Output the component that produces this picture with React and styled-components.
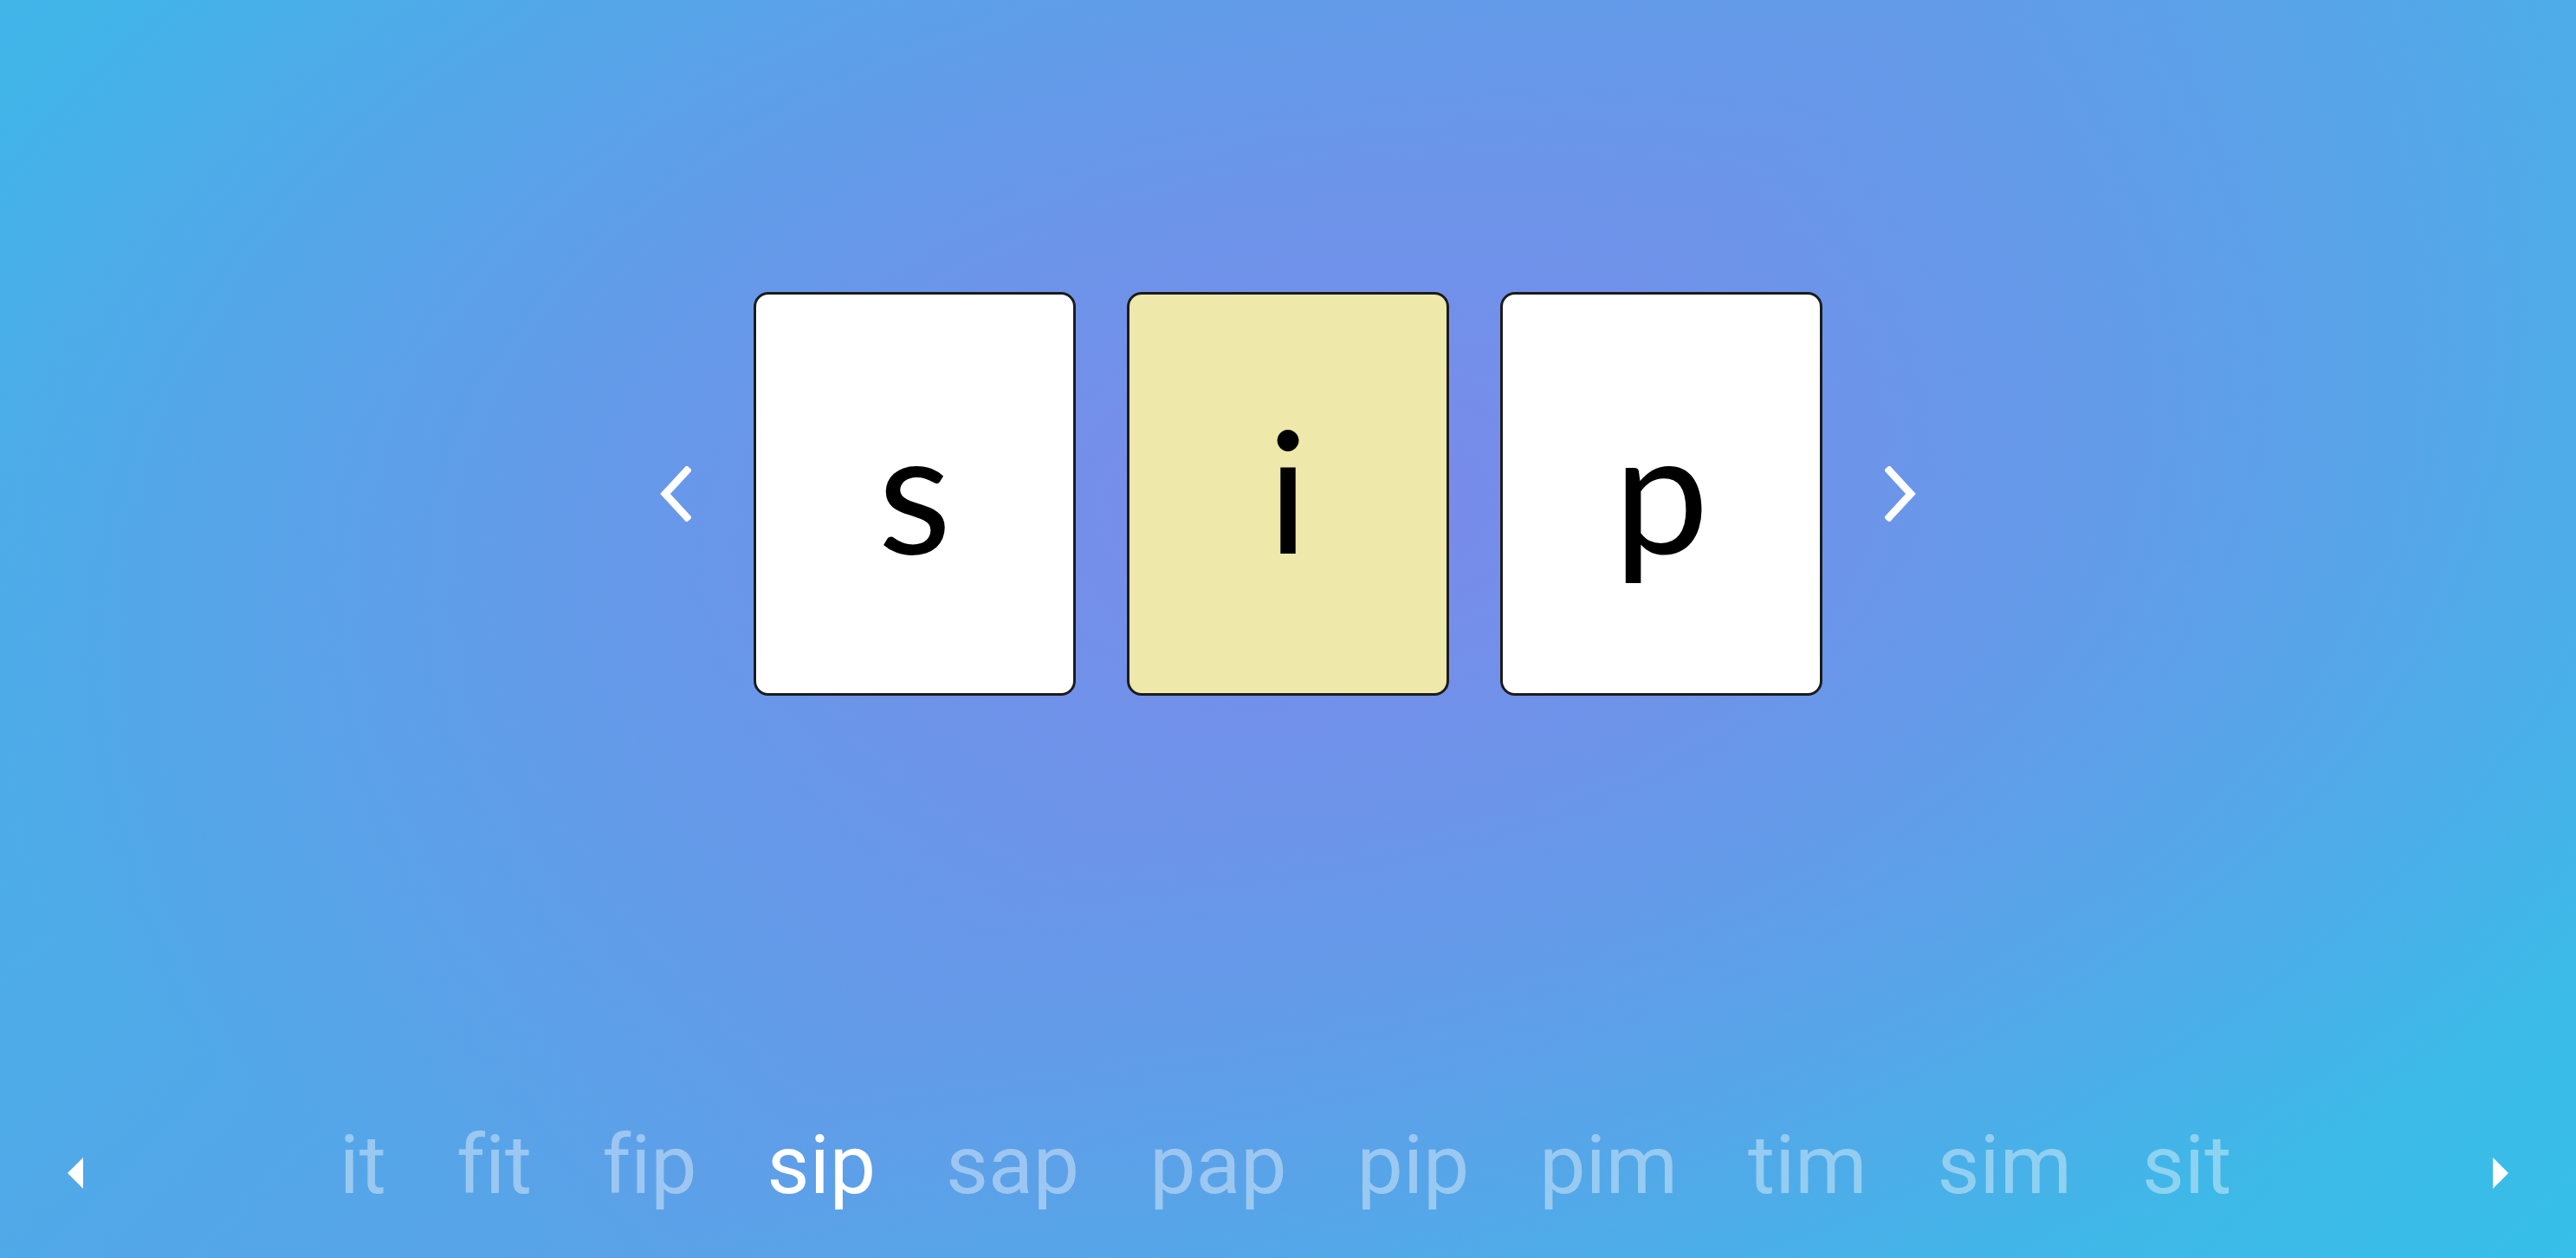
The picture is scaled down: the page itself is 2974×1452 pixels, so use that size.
import React from "react";
import styled, { createGlobalStyle } from "styled-components";

const Global = createGlobalStyle`
  html, body { margin: 0; padding: 0; height: 100%; overflow: hidden; }
  #root { height: 100%; }
`;

const Page = styled.div`
  height: 100vh;
  display: flex;
  flex-direction: column;
  background:
    radial-gradient(ellipse 58% 68% at 52% 40%, rgba(122, 138, 234, 1) 0%, rgba(122, 138, 234, 0) 100%),
    linear-gradient(135deg, #40b5e8 0%, #5aa2e8 50%, #36bfe8 100%);
  font-family: Roboto, "Liberation Sans", sans-serif;
`;

const Stage = styled.main`
  height: 1140px;
  display: flex;
  align-items: center;
  justify-content: center;
`;

const NavButton = styled.button`
  border: none;
  background: none;
  padding: 0;
  margin: 0 ${(p) => (p.$side === "left" ? "72px" : "0")} 0 ${(p) => (p.$side === "right" ? "72px" : "0")};
  display: flex;
  width: 36px;
  height: 64px;
  cursor: pointer;
`;

const Cards = styled.div`
  display: flex;
  gap: 59px;
`;

const Card = styled.div`
  box-sizing: border-box;
  width: 372px;
  height: 466px;
  border: 3px solid #1c1c1c;
  border-radius: 17px;
  background: ${(p) => (p.$active ? "#eee8aa" : "#ffffff")};
  display: flex;
  align-items: center;
  justify-content: center;
  padding-bottom: 12px;
  font-family: Lato, "Open Sans", sans-serif;
  font-weight: 400;
  font-size: 196px;
  line-height: 1;
  color: #000;
`;

const Footer = styled.footer`
  display: flex;
  align-items: center;
  justify-content: space-between;
  padding: 149px 78px 0 78px;
`;

const Arrow = styled.button`
  border: none;
  background: none;
  padding: 0;
  margin-top: 18px;
  width: 18px;
  height: 36px;
  display: flex;
  cursor: pointer;
`;

const Words = styled.div`
  display: flex;
  gap: 81px;
  align-items: baseline;
  margin-right: 6px;
`;

const Word = styled.span`
  font-size: 95px;
  line-height: normal;
  font-variant-ligatures: none;
  font-feature-settings: "liga" 0;
  color: ${(p) => (p.$active ? "#ffffff" : "rgba(255, 255, 255, 0.4)")};
`;

const Chevron = ({ dir }) => (
  <svg width="36" height="64" viewBox="0 0 36 64">
    <polyline
      points={dir === "left" ? "31,5 6,32 31,59" : "5,5 30,32 5,59"}
      fill="none"
      stroke="#fff"
      strokeWidth="8.5"
      strokeLinecap="square"
      strokeLinejoin="miter"
    />
  </svg>
);

const Tri = ({ dir }) => (
  <svg width="18" height="36" viewBox="0 0 18 36">
    <polygon points={dir === "left" ? "18,0 0,18 18,36" : "0,0 18,18 0,36"} fill="#fff" />
  </svg>
);

const letters = ["s", "i", "p"];
const words = ["it", "fit", "fip", "sip", "sap", "pap", "pip", "pim", "tim", "sim", "sit"];

export default function App() {
  return (
    <>
      <Global />
      <Page>
        <Stage>
          <NavButton $side="left" aria-label="previous">
            <Chevron dir="left" />
          </NavButton>
          <Cards>
            {letters.map((l, i) => (
              <Card key={i} $active={i === 1}>
                {l}
              </Card>
            ))}
          </Cards>
          <NavButton $side="right" aria-label="next">
            <Chevron dir="right" />
          </NavButton>
        </Stage>
        <Footer>
          <Arrow aria-label="scroll left">
            <Tri dir="left" />
          </Arrow>
          <Words>
            {words.map((w) => (
              <Word key={w} $active={w === "sip"}>
                {w}
              </Word>
            ))}
          </Words>
          <Arrow aria-label="scroll right">
            <Tri dir="right" />
          </Arrow>
        </Footer>
      </Page>
    </>
  );
}
